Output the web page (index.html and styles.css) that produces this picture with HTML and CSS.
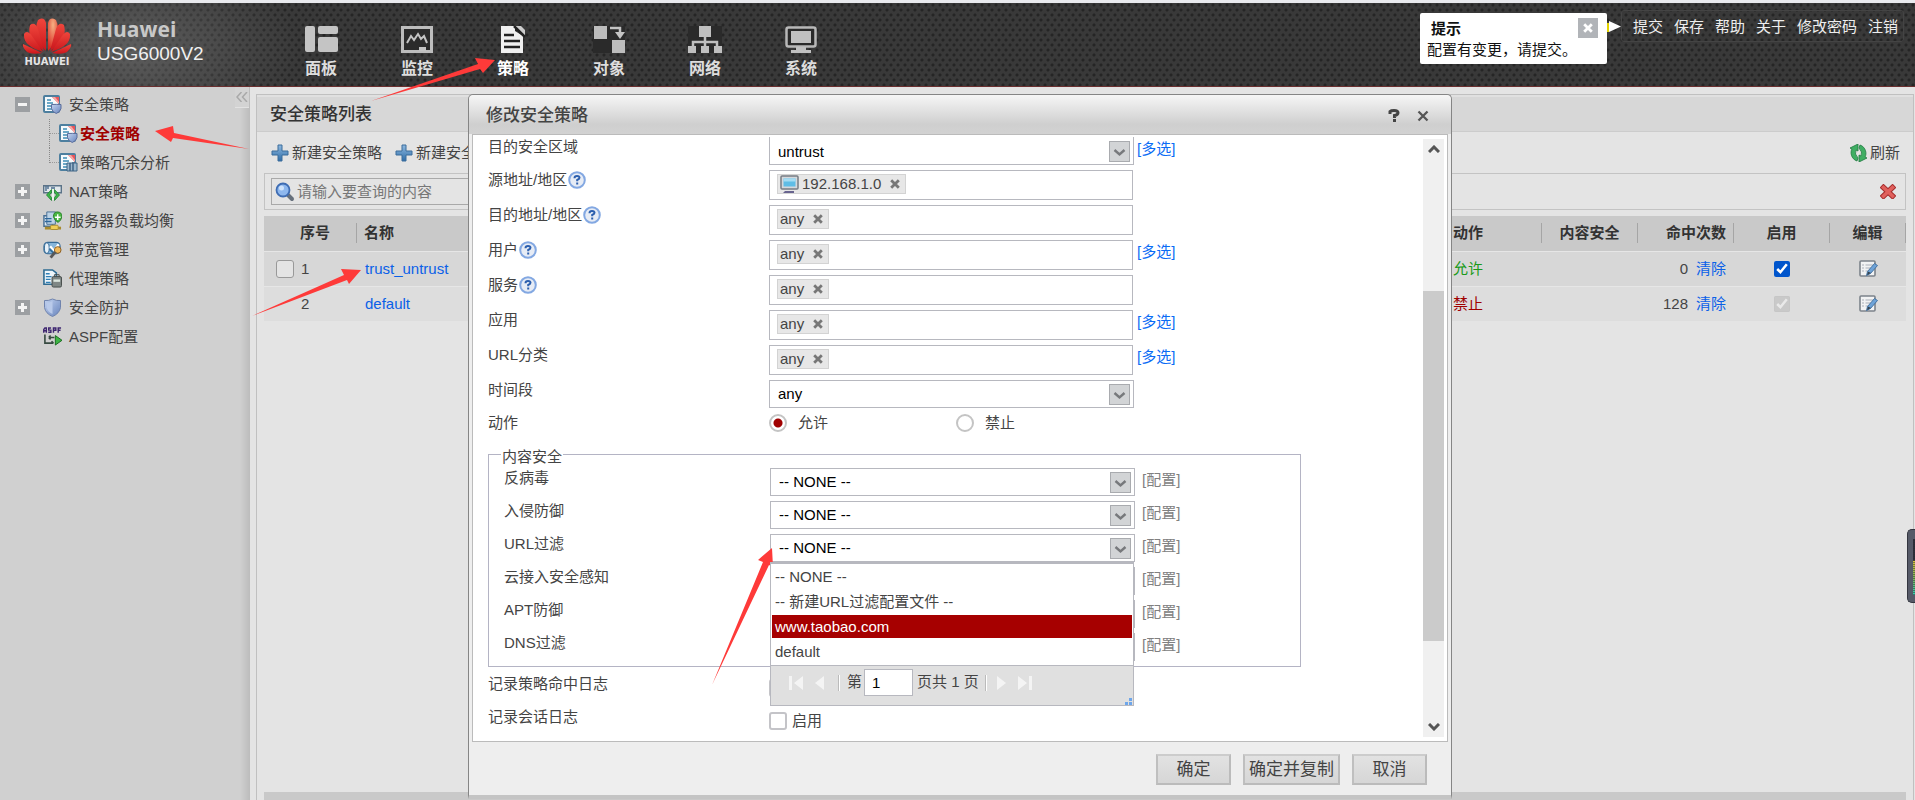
FILE: index.html
```html
<!DOCTYPE html>
<html lang="zh-CN">
<head>
<meta charset="utf-8">
<title>Huawei USG6000V2</title>
<link rel="stylesheet" href="styles.css">
</head>
<body>
<svg class="defs" width="0" height="0" aria-hidden="true">
  <linearGradient id="blue" x1="0" y1="0" x2="0" y2="1"><stop offset="0" stop-color="#8fb9e0"/><stop offset="1" stop-color="#2f6da8"/></linearGradient>
  <linearGradient id="shieldFill" x1="0" y1="0" x2="1" y2="1"><stop offset="0" stop-color="#c3d3f0"/><stop offset="1" stop-color="#6784bd"/></linearGradient>
  <linearGradient id="petalFill" x1="0" y1="0" x2="0" y2="1"><stop offset="0" stop-color="#f0463c"/><stop offset="1" stop-color="#c9161c"/></linearGradient>
  <radialGradient id="petalShine" cx=".5" cy=".2" r=".8"><stop offset="0" stop-color="#f7b183"/><stop offset="1" stop-color="#d8251f"/></radialGradient>
  <symbol id="doc" viewBox="0 0 19 19">
    <rect x="1" y="1" width="15" height="16" rx="1" fill="#f6fafc" stroke="#4d7f9f" stroke-width="2"/>
    <path d="M4 5h4M4 8h6M4 11h5M4 14h5" stroke="#3f8db5" stroke-width="1.5"/>
    <path d="M9 2h7v7z" fill="#e8555a"/><path d="M9 2l3 0 4 5v2z" fill="#f7a9a5"/>
  </symbol>
  <symbol id="policy" viewBox="0 0 19 19"><use href="#doc" width="19" height="19"/>
    <path d="M8.500 9.500q5-.3 9.500 0v4q-.8 3.500-4.700 5-4-1.500-4.800-5z" fill="url(#shieldFill)" stroke="#5a6c9a"/></symbol>
  <symbol id="analysis" viewBox="0 0 19 19"><use href="#doc" width="19" height="19"/>
    <path d="M8 10h10v8H8z" fill="#9cb7cc" stroke="#3f6485"/><path d="M11 10v8M14 9v9" stroke="#3f6485" stroke-width="1.500"/></symbol>
  <symbol id="nat" viewBox="0 0 19 19">
    <path d="M.7 3.700h17.600v7H.7z" fill="#e3e9ed" stroke="#5b7388" stroke-width="1.400"/><path d="M3 4v5M5 4v3M8 6h4" stroke="#4a6b8c" stroke-width="1.400" fill="none"/>
    <path d="M10 7v11" stroke="#e9f3ea" stroke-width="2"/>
    <path d="M8.500 7.500v3L6.500 13l2 2.500v3L3.500 13zM11.500 7.500v3l2 2.500-2 2.500v3l5-5.500z" fill="#3cb849" stroke="#1d7d2c" stroke-width=".8"/></symbol>
  <symbol id="server" viewBox="0 0 20 20">
    <path d="M1 5h9v11H1z" fill="#dce9f3" stroke="#486f94" stroke-width="1.500"/><path d="M4 1h9v13H4z" fill="#bcd3e6" stroke="#486f94"/>
    <path d="M2 8h7M2 11h7" stroke="#2d679b" stroke-width="1.500"/><path d="M15 1q5 0 5 5-1 4-4 6-4-2-5-6 0-5 4-5z" fill="#49b842" stroke="#237a25"/>
    <path d="M15.500 3.500v6M12.500 6.500h6" stroke="#fff" stroke-width="1.500"/><path d="M2 18h17" stroke="#a98b2d" stroke-width="3"/><rect x="8" y="15" width="8" height="4.500" rx="1" fill="#f0cf57" stroke="#a98b2d"/></symbol>
  <symbol id="bandwidth" viewBox="0 0 20 19">
    <rect x="1" y="2" width="17" height="12" rx="4" fill="#86b5da" stroke="#366a96" stroke-width="1.200"/><ellipse cx="4" cy="8" rx="2.500" ry="5.500" fill="#e8f2fa" stroke="#366a96"/>
    <path d="M7.500 6l4 5 5-7" stroke="#fff" stroke-width="2.500" fill="none"/><path d="M7 9l5 5" stroke="#2f6f9f" stroke-width="2"/><circle cx="15.500" cy="10" r="3.500" fill="#f0b95b" stroke="#8b5c20"/><path d="M13 12l-5 6" stroke="#585858" stroke-width="3"/></symbol>
  <symbol id="proxy" viewBox="0 0 20 20">
    <path d="M1 1h9l4 3v12H1z" fill="#eef6fb" stroke="#2f6c93" stroke-width="1.700"/><path d="M3 5h4M3 8h6M3 11h5M3 14h5" stroke="#2f7fb5" stroke-width="1.400"/>
    <rect x="9.500" y="8" width="10" height="11" rx="1.500" fill="#7f8785" stroke="#444b49"/><rect x="11" y="11" width="7" height="2.500" fill="#dce6df"/><path d="M12 8V6h5v2" stroke="#444b49" fill="none"/></symbol>
  <symbol id="shield" viewBox="0 0 18 19">
    <path d="M9 1q4 2 8 1.500v7q-1 6-8 9-7-3-8-9v-7Q5 3 9 1z" fill="url(#shieldFill)" stroke="#6f83ad"/><path d="M9 3v13q-5-2-6-7V4.500q3 0 6-1.500z" fill="#b9caea"/></symbol>
  <symbol id="aspf" viewBox="0 0 20 20">
    <path d="M.8 6V2.500L2 1h1.500v5M1 4h2.500M8.500 1H6v2.300h2.300v2.200H5.500M11 6V1h2.500v2.500H11M19 1h-3v5M16 3.500h2.500" stroke="#3d2570" stroke-width="1.500" fill="none"/>
    <path d="M2 8v9h9M6 11h6M6 11l2-2M6 11l2 2M11 17l-2-2" stroke="#374a41" stroke-width="1.700" fill="none"/><path d="M13 9l7 5-7 5z" fill="#3cb443" stroke="#17691f"/></symbol>
  <symbol id="plus" viewBox="0 0 18 18"><path d="M7 1h4v6h6v4h-6v6H7v-6H1V7h6z" fill="url(#blue)" stroke="#3b6c9b"/></symbol>
  <symbol id="help" viewBox="0 0 18 18"><circle cx="9" cy="9" r="7.800" fill="#e7ecf5" stroke="#83a8e2" stroke-width="2"/>
    <path d="M6.500 7.200q0-2.300 2.500-2.300T11.500 6.800Q11.500 8 9.200 9v1.300M9.200 11.500v2" stroke="#2c5fae" stroke-width="2" fill="none"/></symbol>
  <symbol id="cross" viewBox="0 0 10 10"><path d="M1.200 1.200l7.600 7.600M8.800 1.200L1.200 8.800" stroke="currentColor" stroke-width="2.800"/></symbol>
  <symbol id="chev" viewBox="0 0 21 21"><rect x=".5" y=".5" width="20" height="20" fill="#d2d4d6" stroke="#a9abaf"/><path d="M5.500 9l5 4.500 5-4.500" stroke="#77797c" stroke-width="2.400" fill="none"/></symbol>
  <symbol id="edit" viewBox="0 0 19 18"><rect x="1" y="1" width="15" height="15" rx="1" fill="#f2f3f4" stroke="#7c838a" stroke-width="1.600"/>
    <path d="M3 5h2M3 8h2M3 11h2M6.500 5H14M6.500 8H12M6.500 11H9" stroke="#aab0b7" stroke-width="1.200"/><path d="M15.500 3.500l3 2-7 8-4 2 1-4z" fill="#6ea3d8" stroke="#3d6c9c" stroke-width=".9"/><path d="M9 11.500l3 1.500-4 2z" fill="#34434f"/></symbol>
</svg>

<header class="top">
  <div class="brand">
    <div class="logo">
      <svg width="50" height="38" viewBox="0 0 50 38" aria-hidden="true">
        <g transform="translate(25 37)">
          <path d="M-1-2C-9-11-14-22-9-33Q-3-37-1-30z" fill="url(#petalFill)"/>
          <path d="M1-2C9-11 14-22 9-33Q3-37 1-30z" fill="url(#petalShine)"/>
          <path d="M-3-2C-14-9-20-17-17-28Q-12-32-9-24z" fill="url(#petalFill)"/>
          <path d="M3-2C14-9 20-17 17-28Q12-32 9-24z" fill="url(#petalFill)"/>
          <path d="M-4-1C-15-5-24-9-23-19Q-20-24-15-17z" fill="url(#petalFill)"/>
          <path d="M4-1C15-5 24-9 23-19Q20-24 15-17z" fill="url(#petalFill)"/>
          <path d="M-5 0Q-17 2-21-2-25-7-24-9z" fill="url(#petalFill)"/>
          <path d="M5 0Q17 2 21-2 25-7 24-9z" fill="url(#petalFill)"/>
        </g>
      </svg>
      <span class="logo-name">HUAWEI</span>
    </div>
    <div class="product"><strong>Huawei</strong><span>USG6000V2</span></div>
  </div>
  <nav class="nav">
    <a href="#"><svg width="34" height="28"><g fill="#c4c4c4"><rect x="1" y="0" width="10" height="26" rx="2"/><rect x="14" y="0" width="20" height="8" rx="2"/><rect x="14" y="11" width="20" height="15" rx="2"/></g></svg>面板</a>
    <a href="#"><svg width="32" height="28"><path d="M1.500 1.500h29v24h-29z" fill="#2b2b2b" stroke="#bdbdbd" stroke-width="3"/><path d="M6 17l4-7 3 4 4-6 3 5 3-3 3 7" stroke="#c4c4c4" stroke-width="2" fill="none"/><path d="M18 21h7v4h-7z" fill="#c4c4c4"/></svg>监控</a>
    <a href="#" class="on"><svg width="28" height="28"><path d="M2 0h14v5l8 5v17H2z" fill="#f0f0f0"/><path d="M16 0l10 10V4l-4-4z" fill="#e8e8e8" opacity=".85"/><path d="M15 0l11 11" stroke="#222" stroke-width="2.500"/><path d="M5 9h10M5 15h16M5 21h16" stroke="#222" stroke-width="2.500"/></svg>策略</a>
    <a href="#"><svg width="32" height="28"><path d="M0 0h32v27H0z" fill="#2a2a2a"/><path d="M1 0h13v13H1zM19 14h13v13H19z" fill="#bdbdbd"/><path d="M17 2h10v6" stroke="#c4c4c4" stroke-width="2.500" fill="none"/><path d="M22 6h10l-5 7z" fill="#c4c4c4"/></svg>对象</a>
    <a href="#"><svg width="34" height="28"><path d="M0 0h34v27H0z" fill="#2a2a2a"/><path d="M11 0h12v11H11zM0 20h8v7H0zM13 20h8v7h-8zM26 20h8v7h-8z" fill="#c0c0c0"/><path d="M17 10v10M5 21v-5h24v5" stroke="#c0c0c0" stroke-width="2.500" fill="none"/></svg>网络</a>
    <a href="#"><svg width="32" height="28"><rect x="1.500" y="1.500" width="29" height="19" rx="2" fill="#2a2a2a" stroke="#b8b8b8" stroke-width="2.500"/><path d="M6 5h20v12H6z" fill="#c0c0c0"/><path d="M11 21h10v3h5v3H6v-3h5z" fill="#c0c0c0"/></svg>系统</a>
  </nav>
  <section class="tip">
    <div class="tip-head"><b>提示</b><button type="button" aria-label="关闭"><svg width="10" height="10"><use href="#cross"/></svg></button></div>
    <p>配置有变更，请提交。</p>
  </section>
  <svg class="tip-arrow" width="14" height="13" aria-hidden="true"><path d="M0 3h2v9H0z" fill="#e3d400"/><path d="M2 1l12 5.500L2 12z" fill="#fff"/></svg>
  <div class="quick"><a href="#">提交</a><a href="#">保存</a><a href="#">帮助</a><a href="#">关于</a><a href="#">修改密码</a><a href="#">注销</a></div>
</header>

<div class="page">
  <aside class="side">
    <button class="collapse" type="button" aria-label="收起"><svg width="12" height="10"><path d="M5.500 0L1 5l4.500 5M11 0L6.500 5 11 10" stroke="#a9a9a9" stroke-width="1.500" fill="none"/></svg></button>
    <ul class="tree">
      <li><i class="knob minus"></i><svg width="19" height="19"><use href="#policy"/></svg><a href="#">安全策略</a></li>
      <li class="sub"><i class="branch"></i><svg width="19" height="19"><use href="#policy"/></svg><a href="#" class="cur">安全策略</a></li>
      <li class="sub last"><i class="branch"></i><svg width="19" height="19"><use href="#analysis"/></svg><a href="#">策略冗余分析</a></li>
      <li><i class="knob"></i><svg width="19" height="19"><use href="#nat"/></svg><a href="#">NAT策略</a></li>
      <li><i class="knob"></i><svg width="19" height="19"><use href="#server"/></svg><a href="#">服务器负载均衡</a></li>
      <li><i class="knob"></i><svg width="19" height="19"><use href="#bandwidth"/></svg><a href="#">带宽管理</a></li>
      <li><i class="knob none"></i><svg width="19" height="19"><use href="#proxy"/></svg><a href="#">代理策略</a></li>
      <li><i class="knob"></i><svg width="19" height="19"><use href="#shield"/></svg><a href="#">安全防护</a></li>
      <li><i class="knob none"></i><svg width="19" height="19"><use href="#aspf"/></svg><a href="#">ASPF配置</a></li>
    </ul>
  </aside>

  <main class="panel">
    <h1>安全策略列表</h1>
    <div class="tools">
      <button type="button"><svg width="18" height="18"><use href="#plus"/></svg>新建安全策略</button>
      <button type="button"><svg width="18" height="18"><use href="#plus"/></svg>新建安全策略组</button>
      <button type="button" class="refresh"><svg width="17" height="18" viewBox="0 0 17 18"><path d="M7 17C1 15 0 8 2 5L0 4l8-4v7L6 6q-2 4 2 8z" fill="#3fae63" stroke="#1f7a3f" stroke-width=".8"/><path d="M10 1c6 2 7 9 5 12l2 1-8 4v-7l2 1q2-4-2-8z" fill="#3fae63" stroke="#1f7a3f" stroke-width=".8"/></svg>刷新</button>
    </div>
    <div class="search">
      <label class="search-box"><svg width="20" height="20" viewBox="0 0 20 20"><path d="M12 12l5 5" stroke="#66707c" stroke-width="4" stroke-linecap="round"/><circle cx="8" cy="8" r="6.500" fill="#8db7ee" stroke="#3e6cb3" stroke-width="1.800"/><circle cx="6.500" cy="6" r="2.500" fill="#cfe3fb"/></svg><input type="text" aria-label="查询" placeholder="请输入要查询的内容"></label>
      <button type="button" aria-label="清除"><svg width="16" height="15" viewBox="0 0 16 15"><path d="M3.500 3.500l9 8.500M12.500 3.500l-9 8.500" stroke="#a52d2d" stroke-width="5.500" stroke-linecap="square"/><path d="M3.500 3.500l9 8.500M12.500 3.500l-9 8.500" stroke="#e0605c" stroke-width="3.500" stroke-linecap="square"/></svg></button>
    </div>
    <table class="list">
      <colgroup><col class="c-no"><col><col class="c-act"><col class="c-act"><col class="c-act"><col class="c-act"><col class="c-edit"></colgroup>
      <thead><tr><th class="no"><span>序号</span></th><th><span>名称</span></th><th><span>动作</span></th><th class="mid"><span>内容安全</span></th><th class="end"><span>命中次数</span></th><th class="mid"><span>启用</span></th><th class="mid"><span>编辑</span></th></tr></thead>
      <tbody>
        <tr><td><div class="num"><span class="slot"><input type="checkbox" class="box" aria-label="选择 1"></span>1</div></td><td><a href="#">trust_untrust</a></td><td class="ok">允许</td><td></td><td class="end">0<a href="#" class="clear">清除</a></td><td class="mid"><input type="checkbox" class="tick" checked aria-label="启用 trust_untrust"></td><td class="mid"><a href="#" aria-label="编辑"><svg width="19" height="18"><use href="#edit"/></svg></a></td></tr>
        <tr><td><div class="num"><span class="slot"></span>2</div></td><td><a href="#">default</a></td><td class="no-go">禁止</td><td></td><td class="end">128<a href="#" class="clear">清除</a></td><td class="mid"><input type="checkbox" class="tick" checked disabled aria-label="启用 default"></td><td class="mid"><a href="#" aria-label="编辑"><svg width="19" height="18"><use href="#edit"/></svg></a></td></tr>
      </tbody>
    </table>
    <div class="status"></div>
  </main>
</div>

<section class="dialog" role="dialog" aria-label="修改安全策略">
  <header class="dialog-head"><h2>修改安全策略</h2>
    <button type="button" aria-label="帮助"><svg width="12" height="13"><path d="M2 5V2.500Q3 1.500 6 1.500q4 0 4 2.300Q10 6 6.500 6.500V9M6.500 10v3" stroke="#444" stroke-width="3" fill="none"/></svg></button>
    <button type="button" aria-label="关闭"><svg width="12" height="12"><path d="M1.500 1.500l9 9M10.500 1.500l-9 9" stroke="#555" stroke-width="2.300"/></svg></button>
  </header>
  <div class="dialog-body">
    <form class="form">
      <div class="row cut"><label for="zone">目的安全区域</label><div class="combo"><select id="zone"><option>untrust</option></select><svg width="21" height="21"><use href="#chev"/></svg></div><a href="#">[多选]</a></div>
      <div class="row"><span class="lab">源地址/地区<svg width="18" height="18"><use href="#help"/></svg></span><div class="tags"><span class="tag host"><svg width="19" height="18" viewBox="0 0 19 18"><rect x="1" y="1" width="17" height="13" rx="1" fill="#d5d8dc" stroke="#777c84" stroke-width="1.500"/><path d="M3.500 3.500h12v8h-12z" fill="#5fbde6"/><path d="M3.500 3.500h12v3h-12z" fill="#a5dcf3"/><path d="M5 16h9v2H3z" fill="#68648f"/></svg>192.168.1.0<button type="button" aria-label="移除"><svg width="10" height="10"><use href="#cross"/></svg></button></span></div></div>
      <div class="row"><span class="lab">目的地址/地区<svg width="18" height="18"><use href="#help"/></svg></span><div class="tags"><span class="tag">any<button type="button" aria-label="移除"><svg width="10" height="10"><use href="#cross"/></svg></button></span></div></div>
      <div class="row"><span class="lab">用户<svg width="18" height="18"><use href="#help"/></svg></span><div class="tags"><span class="tag">any<button type="button" aria-label="移除"><svg width="10" height="10"><use href="#cross"/></svg></button></span></div><a href="#">[多选]</a></div>
      <div class="row"><span class="lab">服务<svg width="18" height="18"><use href="#help"/></svg></span><div class="tags"><span class="tag">any<button type="button" aria-label="移除"><svg width="10" height="10"><use href="#cross"/></svg></button></span></div></div>
      <div class="row"><span class="lab">应用</span><div class="tags"><span class="tag">any<button type="button" aria-label="移除"><svg width="10" height="10"><use href="#cross"/></svg></button></span></div><a href="#">[多选]</a></div>
      <div class="row"><span class="lab">URL分类</span><div class="tags"><span class="tag">any<button type="button" aria-label="移除"><svg width="10" height="10"><use href="#cross"/></svg></button></span></div><a href="#">[多选]</a></div>
      <div class="row"><label for="time">时间段</label><div class="combo"><select id="time"><option>any</option></select><svg width="21" height="21"><use href="#chev"/></svg></div></div>
      <div class="row"><span class="lab">动作</span><div class="radios"><label><input type="radio" name="act" checked>允许</label><label><input type="radio" name="act">禁止</label></div></div>
      <fieldset class="security">
        <legend>内容安全</legend>
        <div class="row"><label for="av">反病毒</label><div class="combo"><select id="av"><option>-- NONE --</option></select><svg width="21" height="21"><use href="#chev"/></svg></div><a href="#">[配置]</a></div>
        <div class="row"><label for="ips">入侵防御</label><div class="combo"><select id="ips"><option>-- NONE --</option></select><svg width="21" height="21"><use href="#chev"/></svg></div><a href="#">[配置]</a></div>
        <div class="row"><label for="url">URL过滤</label>
          <div class="combo"><select id="url"><option>-- NONE --</option></select><svg width="21" height="21"><use href="#chev"/></svg>
            <div class="popup">
              <ul><li>-- NONE --</li><li>-- 新建URL过滤配置文件 --</li><li class="hot">www.taobao.com</li><li>default</li></ul>
              <div class="pager">
                <button type="button" aria-label="首页"><svg width="17" height="16"><path d="M2 1h3v14H2zM16 1v14L7 8z" fill="#f4f4f4"/></svg></button>
                <button type="button" aria-label="上一页"><svg width="10" height="16"><path d="M10 1v14L1 8z" fill="#f4f4f4"/></svg></button>
                <i></i><label for="pg">第</label><input id="pg" type="text" value="1"><span>页共 1 页</span><i></i>
                <button type="button" aria-label="下一页"><svg width="10" height="16"><path d="M0 1v14l9-7z" fill="#f4f4f4"/></svg></button>
                <button type="button" aria-label="末页"><svg width="17" height="16"><path d="M12 1h3v14h-3zM1 1v14l9-7z" fill="#f4f4f4"/></svg></button>
              </div>
              <svg class="grip" width="9" height="7" aria-hidden="true"><path d="M5 0h3v3H5zM1 4h3v3H1zM5 4h3v3H5z" fill="#6ea6ea"/></svg>
            </div>
          </div><a href="#">[配置]</a></div>
        <div class="row"><label for="cloud">云接入安全感知</label><div class="combo"><select id="cloud"><option>-- NONE --</option></select><svg width="21" height="21"><use href="#chev"/></svg></div><a href="#">[配置]</a></div>
        <div class="row"><label for="apt">APT防御</label><div class="combo"><select id="apt"><option>-- NONE --</option></select><svg width="21" height="21"><use href="#chev"/></svg></div><a href="#">[配置]</a></div>
        <div class="row"><label for="dns">DNS过滤</label><div class="combo"><select id="dns"><option>-- NONE --</option></select><svg width="21" height="21"><use href="#chev"/></svg></div><a href="#">[配置]</a></div>
      </fieldset>
      <div class="row"><span class="lab">记录策略命中日志</span><div class="check"><input type="checkbox" class="box" aria-label="记录策略命中日志"></div></div>
      <div class="row"><span class="lab">记录会话日志</span><label class="check"><input type="checkbox" class="box">启用</label></div>
    </form>
    <div class="scroll">
      <button type="button" aria-label="向上"><svg width="12" height="8"><path d="M1 7l5-5 5 5" stroke="#555" stroke-width="3" fill="none"/></svg></button>
      <div class="track"><div class="thumb"></div></div>
      <button type="button" aria-label="向下"><svg width="12" height="8"><path d="M1 1l5 5 5-5" stroke="#555" stroke-width="3" fill="none"/></svg></button>
    </div>
  </div>
  <footer class="dialog-foot"><button type="button">确定</button><button type="button" class="wide">确定并复制</button><button type="button">取消</button></footer>
</section>

<div class="meter" aria-hidden="true"><span></span></div>

<svg class="marks" aria-hidden="true">
  <g fill="#fe3a39">
    <path d="M371 101L478 64 475 58 495 60 483 73 480 69z"/>
    <path d="M249 149L174 133 173 126 155 131 171 142 173 138z"/>
    <path d="M252 316L344 275 341 269 361 270 349 284 347 280z"/>
    <path d="M712 685L763 562 758 560 772 548 773 567 769 565z"/>
  </g>
</svg>
</body>
</html>
```

FILE: styles.css
```css
* { box-sizing: border-box; }
html, body { height: 100%; margin: 0; }
body {
  display: flex; flex-direction: column; position: relative; overflow: hidden;
  border-top: 3px solid #e9eaee; background: #e4e4e4; color: #444;
  font: 15px/20px "Liberation Sans", "Noto Sans CJK SC", sans-serif;
}
a { color: #0b61e8; text-decoration: none; }
button { padding: 0; border: 0; background: none; font: inherit; color: inherit; }
input, select { font: inherit; margin: 0; }
h1, h2, p, ul { margin: 0; padding: 0; list-style: none; }
svg { display: block; flex: none; }
.defs { position: absolute; }

/* top bar */
.top {
  display: flex; flex: none; position: relative; height: 84px;
  border-bottom: 1px solid #6b2f2f; color: #ddd;
  background:
    radial-gradient(ellipse 170px 90px at 130px 45px, rgba(150, 150, 150, .4), transparent),
    radial-gradient(circle at 2px 2px, #252525 1px, transparent 2px) 0 0 / 7px 10px,
    radial-gradient(circle at 2px 2px, #252525 1px, transparent 2px) 3px 5px / 7px 10px,
    #393939;
}
.brand { display: flex; gap: 25px; width: 273px; padding: 13px 0 0 22px; }
.logo { width: 50px; }
.logo-name { display: block; font: bold 10px/16px "DejaVu Sans", sans-serif; color: #e4e4e4; text-align: center; }
.product strong { display: block; font: 700 21px/26px "Open Sans", "Noto Sans", sans-serif; color: #c8c8c8; }
.product span { display: block; font-size: 19px; line-height: 24px; color: #f0f0f0; }
.nav { display: flex; flex: 1; }
.nav a { display: flex; flex-direction: column; align-items: center; gap: 5px; width: 96px; padding-top: 23px; font-size: 16px; font-weight: 600; color: #ddd; }
.nav .on { color: #fff; }
.tip { width: 187px; height: 51px; margin-top: 10px; padding: 5px 9px 0 7px; border-radius: 2px; background: #fff; color: #111; }
.tip-head { display: flex; justify-content: space-between; padding-left: 4px; line-height: 22px; }
.tip-head button { display: grid; place-items: center; width: 20px; height: 20px; background: #b1b4b8; color: #fff; }
.tip-arrow { margin: 17px 0 0; }
.quick { display: flex; gap: 11px; align-self: flex-start; height: 32px; margin: 7px 11px 0 0; padding: 6px 5px 0 11px; border: 1px solid #444; border-radius: 3px; }
.quick a { color: #eee; }

/* page */
.page { display: flex; flex: 1; min-height: 0; }
.side { position: relative; width: 250px; flex: none; padding-top: 3px; background: linear-gradient(90deg, #d0d0d0 240px, #bcbcbc 250px); }
.collapse { position: absolute; top: 0; right: 1px; display: grid; place-items: center; width: 14px; height: 21px; background: #d3d3d3; border-bottom: 1px solid #e2e2e2; }
.tree li { display: flex; align-items: center; height: 29px; padding-left: 15px; }
.tree li > a { color: #444; margin-left: 7px; }
.knob { width: 15px; height: 15px; margin-right: 13px; background: linear-gradient(#f4f4f4, #f4f4f4) center / 9px 3px no-repeat, linear-gradient(#f4f4f4, #f4f4f4) center / 3px 9px no-repeat, #9c9fa2; }
.knob.minus { background: linear-gradient(#f4f4f4, #f4f4f4) center / 9px 3px no-repeat, #9c9fa2; }
.knob.none { background: none; }
.tree .sub { padding-left: 49px; }
.tree .sub > a { margin-left: 2px; }
.tree .sub > a.cur { color: #a00000; font-weight: bold; }
.branch { align-self: stretch; width: 10px; border-left: 1px dotted #888; background: linear-gradient(90deg, #999 50%, transparent 50%) 0 14px / 2px 1px repeat-x; }
.last .branch { height: 15px; align-self: flex-start; }

.panel { display: flex; flex-direction: column; flex: 1; min-width: 0; margin: 7px 1px 0 6px; border: 1px solid #c0c0c0; border-bottom: 0; }
.panel h1 { height: 37px; padding-left: 13px; border-top: 2px solid #e0e0e0; border-bottom: 1px solid #ccc; background: #d7d7d7; color: #333; font-size: 17px; line-height: 36px; font-weight: 500; }
.tools { display: flex; align-items: center; gap: 13px; height: 41px; padding: 9px 13px 8px 14px; }
.tools button { display: flex; align-items: center; gap: 3px; }
.tools .refresh { margin-left: auto; }
.search { display: flex; align-items: center; justify-content: space-between; margin: 0 7px; height: 37px; padding: 4px 9px 4px 6px; border: 1px solid #c3c3c3; }
.search-box { display: flex; align-items: center; width: 600px; height: 27px; padding-left: 3px; border: 1px solid #a9a9a9; }
.search-box input { flex: 1; border: 0; outline: 0; background: none; }
.search-box input::placeholder { color: #777; opacity: 1; }
.list { margin: 6px 7px 0; border-collapse: collapse; table-layout: fixed; }
.c-no { width: 93px; }
.c-act { width: 96px; }
.c-edit { width: 76px; }
.list th { height: 35px; padding: 0; background: #c9c9c9; color: #333; text-align: left; }
.list th span { display: block; padding: 0 7px; border-right: 1px solid #a5a5a5; }
.list th.no span { padding-left: 36px; }
.list th:nth-child(2) span { border: 0; }
.list td { height: 35px; padding: 0 8px; border-top: 1px solid #e6e6e6; }
.list tbody tr { background: #d7d7d7; }
.list tbody tr + tr { background: #ddd; }
.list td:first-child { padding-left: 12px; }
.list .mid, .list .mid span { text-align: center; }
.list .end, .list .end span { text-align: right; }
.list td.ok, .list td.no-go { padding-left: 7px; }
.list .mid svg, .list .mid input { margin: 0 auto; }
.num, .slot { display: flex; align-items: center; }
.slot { width: 25px; }
.clear { margin-left: 8px; }
.ok { color: #1a9a1a; }
.no-go { color: #a00000; }
.status { margin: auto 7px 0; height: 8px; background: #c9c9c9; }

/* tick boxes */
.box { appearance: none; width: 18px; height: 18px; border: 2px solid #c4c4c8; border-radius: 3px; background: #fff; }
.num .box { background: #e4e4e4; border-width: 1px; border-color: #999; }
.tick { display: block; width: 16px; height: 16px; accent-color: #0055cc; }

/* dialog */
.dialog { position: absolute; inset: 91px 463px 1px 468px; display: flex; flex-direction: column; border: 1px solid #858585; border-bottom: 4px solid #c4c4c4; border-radius: 5px 5px 0 0; background: #eee; }
.dialog-head { display: flex; align-items: center; height: 39px; padding: 2px 22px 0 17px; border-radius: 5px 5px 0 0; background: linear-gradient(#f6f6f6, #cfcfcf 75%, #d2d2d2); }
.dialog-head h2 { flex: 1; font-size: 17px; font-weight: 500; color: #444; }
.dialog-head button + button { margin-left: 17px; }
.dialog-body { display: flex; flex: 1; min-height: 0; margin: 0 3px; padding: 2px 3px 4px 15px; border: 1px solid #bbb; background: #fff; }
.form { flex: 1; min-width: 0; display: flex; flex-direction: column; gap: 5px; }
.row { display: grid; grid-template-columns: 281px 365px 1fr; align-items: start; flex: none; }
.row > a { padding-left: 3px; line-height: 24px; color: #0b6cf5; }
.cut select { border-top: 0; }
.lab { display: flex; align-items: center; gap: 1px; }
.combo { position: relative; display: grid; grid-template-columns: 1fr 25px; align-items: center; }
.combo select { grid-area: 1 / 1 / 2 / 3; width: 100%; height: 28px; padding: 0 8px; border: 1px solid #b7b8bf; border-radius: 0; background: #fff; color: #000; appearance: none; }
.cut .combo select { border-top: 0; padding-top: 2px; }
.combo > svg { grid-area: 1 / 2; z-index: 1; pointer-events: none; }
.tags { width: 364px; height: 30px; padding: 3px 7px; border: 1px solid #b7b8bf; }
.tag { display: inline-flex; align-items: center; height: 20px; padding: 0 5px 0 2px; border: 1px solid #d3d3d3; background: #e7e7e7; vertical-align: top; }
.tag button { margin-left: 9px; color: #777; }
.tag.host > svg { margin-right: 3px; }
.radios { display: grid; grid-template-columns: 187px 1fr; }
.radios label { display: flex; align-items: center; gap: 11px; }
.radios input { appearance: none; width: 18px; height: 18px; border: 2px solid #c4c4c4; border-radius: 50%; background: #fff; }
.radios input:checked { background: radial-gradient(circle, #a00000 4px, #fff 5px); }
.security { display: flex; flex-direction: column; gap: 5px; width: 813px; min-width: 0; margin: 3px 0 2px; padding: 1px 0 5px 15px; border: 1px solid #b4b4c4; }
.security legend { margin-left: -3px; padding: 6px 1px 0; }
.security .row { grid-template-columns: 266px 365px 1fr; }
.security .row > a { padding-left: 7px; color: #808080; }
.check { display: flex; align-items: center; gap: 5px; height: 28px; }

.popup { position: absolute; z-index: 3; top: 28px; left: 0; width: 364px; border: 1px solid #b7b8bf; border-top-width: 2px; background: #fff; }
.popup ul { display: flex; flex-direction: column; gap: 2px; padding: 1px 1px 2px; }
.popup li { padding: 2px 3px 1px; }
.popup .hot { background: #a60000; color: #fff; }
.pager { display: flex; align-items: flex-start; height: 40px; padding: 3px 0 0 16px; border-top: 1px solid #b7b8bf; background: #e0e0e0; line-height: 26px; }
.pager button { margin: 6px 10px 0 0; }
.pager i { width: 2px; height: 16px; margin: 6px 7px 0 4px; border-left: 1px solid #bbb; border-right: 1px solid #fff; }
.pager input { width: 49px; height: 27px; margin: 0 4px 0 2px; padding: 0 7px; border: 1px solid #b7b8bf; background: #fff; color: #000; }
.pager span + i { margin-left: 6px; margin-right: 10px; }
.grip { position: absolute; right: 0; bottom: 0; }

.scroll { display: flex; flex-direction: column; width: 21px; margin-top: 2px; background: #f0f0f0; }
.scroll button { display: grid; place-items: center; height: 20px; }
.track { flex: 1; padding-top: 132px; }
.thumb { height: 350px; background: #cbcbcb; }

.dialog-foot { display: flex; justify-content: flex-end; gap: 12px; height: 53px; padding: 12px 24px; }
.dialog-foot button { min-width: 75px; height: 31px; border: 2px solid #bbb; border-top-color: #ccc; border-left-color: #bfbfbf; background: linear-gradient(#e2e2e2, #d6d6d6); font-size: 17px; }
.dialog-foot .wide { min-width: 97px; }

/* edge meter and pointer arrows */
.meter { position: absolute; right: 0; top: 526px; width: 8px; height: 74px; padding: 9px 0 7px 5px; border: 1px solid #33353f; border-right: 0; border-radius: 5px 0 0 5px; background: #565a68; }
.meter span { display: block; height: 100%; background: repeating-linear-gradient(transparent 0 1px, rgba(40, 40, 50, .5) 1px 2px), linear-gradient(#2d2f3a 38%, #d4c23c 40%, #7cb85c 70%, #35d0b0); }
.marks { position: absolute; top: -3px; left: 0; width: 100%; height: 100%; overflow: visible; pointer-events: none; }
```
